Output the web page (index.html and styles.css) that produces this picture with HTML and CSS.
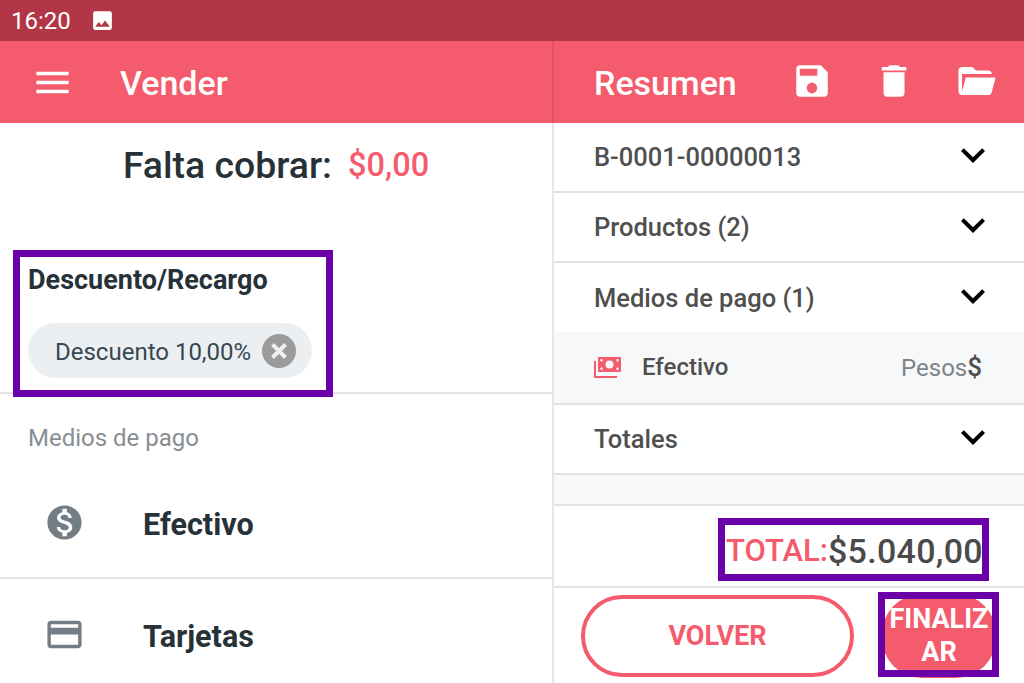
FILE: index.html
```html
<!DOCTYPE html>
<html lang="es">
<head>
    <meta charset="UTF-8">
    <meta name="viewport" content="width=device-width, initial-scale=1.0">
    <title>Vender</title>
    <link rel="stylesheet" href="styles.css">
</head>
<body>
    <div class="status-bar">
        <span class="status-time">16:20</span>
        <svg class="status-icon" viewBox="0 0 24 24"><path d="M21 19V5c0-1.1-.9-2-2-2H5c-1.1 0-2 .9-2 2v14c0 1.1.9 2 2 2h14c1.1 0 2-.9 2-2zM8.5 13.5l2.5 3.01L14.5 12l4.5 6H5l3.5-4.5z"/></svg>
    </div>

    <div class="main">
        <div class="left">
            <header class="app-bar app-bar-left">
                <svg class="bar-icon" viewBox="0 0 24 24"><path d="M3 18h18v-2H3v2zm0-5h18v-2H3v2zm0-7v2h18V6H3z"/></svg>
                <h1>Vender</h1>
            </header>

            <div class="left-body">
                <div class="falta">
                    <span class="falta-label">Falta cobrar:</span>
                    <span class="falta-value">$0,00</span>
                </div>

                <section class="descuento">
                    <h2>Descuento/Recargo</h2>
                    <div class="chip">
                        <span>Descuento 10,00%</span>
                        <svg class="chip-close" viewBox="0 0 34 34">
                            <circle cx="17" cy="17" r="17"/>
                            <path d="M10.5 10.5l13 13M23.5 10.5l-13 13"/>
                        </svg>
                    </div>
                </section>

                <div class="medios-label">Medios de pago</div>

                <div class="medio medio-efectivo">
                    <svg class="medio-icon" viewBox="0 0 24 24"><path d="M12 2C6.48 2 2 6.48 2 12s4.48 10 10 10 10-4.48 10-10S17.52 2 12 2zm1.41 16.09V20h-2.67v-1.93c-1.71-.36-3.16-1.46-3.27-3.4h1.96c.1 1.05.82 1.87 2.65 1.87 1.96 0 2.4-.98 2.4-1.59 0-.83-.44-1.61-2.67-2.14-2.48-.6-4.18-1.62-4.18-3.67 0-1.72 1.39-2.84 3.11-3.21V4h2.67v1.95c1.86.45 2.79 1.86 2.85 3.39H14.3c-.05-1.11-.64-1.87-2.22-1.87-1.5 0-2.4.68-2.4 1.64 0 .84.65 1.39 2.67 1.91s4.18 1.39 4.18 3.91c-.01 1.83-1.38 2.83-3.12 3.16z"/></svg>
                    <span>Efectivo</span>
                </div>
                <div class="medio medio-tarjetas">
                    <svg class="medio-icon" viewBox="0 0 24 24"><path d="M20 4H4c-1.11 0-1.99.89-1.99 2L2 18c0 1.11.89 2 2 2h16c1.11 0 2-.89 2-2V6c0-1.11-.89-2-2-2zm0 14H4v-6h16v6zm0-10H4V6h16v2z"/></svg>
                    <span>Tarjetas</span>
                </div>
            </div>
        </div>

        <div class="right">
            <header class="app-bar app-bar-right">
                <h1>Resumen</h1>
                <div class="bar-actions">
                    <svg class="bar-icon" viewBox="0 0 24 24"><path d="M17 3H5c-1.11 0-2 .9-2 2v14c0 1.1.89 2 2 2h14c1.1 0 2-.9 2-2V7l-4-4zm-5 16c-1.66 0-3-1.34-3-3s1.34-3 3-3 3 1.34 3 3-1.34 3-3 3zm3-10H5V5h10v4z"/></svg>
                    <svg class="bar-icon" viewBox="0 0 24 24"><path d="M6 19c0 1.1.9 2 2 2h8c1.1 0 2-.9 2-2V7H6v12zM19 4h-3.5l-1-1h-5l-1 1H5v2h14V4z"/></svg>
                    <svg class="bar-icon" viewBox="0 0 24 24"><path d="M19 20H4c-1.11 0-2-.9-2-2V6c0-1.11.89-2 2-2h6l2 2h7a2 2 0 0 1 2 2H4v10l2.14-8h17.07l-2.28 8.5c-.23.87-1.01 1.5-1.93 1.5z"/></svg>
                </div>
            </header>

            <div class="row">
                <span>B-0001-00000013</span>
                <svg class="chevron" viewBox="0 0 24 24"><path d="M7.41 8.59L12 13.17l4.59-4.58L18 10l-6 6-6-6 1.41-1.41z"/></svg>
            </div>
            <div class="row">
                <span>Productos (2)</span>
                <svg class="chevron" viewBox="0 0 24 24"><path d="M7.41 8.59L12 13.17l4.59-4.58L18 10l-6 6-6-6 1.41-1.41z"/></svg>
            </div>
            <div class="row row-open">
                <span>Medios de pago (1)</span>
                <svg class="chevron" viewBox="0 0 24 24"><path d="M7.41 8.59L12 13.17l4.59-4.58L18 10l-6 6-6-6 1.41-1.41z"/></svg>
            </div>
            <div class="pago">
                <svg class="pago-icon" viewBox="0 0 28 22"><path fill-rule="evenodd" d="M5 1h21a1 1 0 0 1 1 1v13a1 1 0 0 1-1 1H5a1 1 0 0 1-1-1V2a1 1 0 0 1 1-1zm10.5 3.5a4 4 0 1 0 0 8 4 4 0 1 0 0-8zM7.5 3a1.3 1.3 0 1 0 0 2.6 1.3 1.3 0 1 0 0-2.6zm16 0a1.3 1.3 0 1 0 0 2.6 1.3 1.3 0 1 0 0-2.6zm-16 8.4a1.3 1.3 0 1 0 0 2.6 1.3 1.3 0 1 0 0-2.6zm16 0a1.3 1.3 0 1 0 0 2.6 1.3 1.3 0 1 0 0-2.6zM0 5h2v15h21v2H1a1 1 0 0 1-1-1z"/></svg>
                <span class="pago-name">Efectivo</span>
                <span class="pago-moneda">Pesos<b>$</b></span>
            </div>
            <div class="row">
                <span>Totales</span>
                <svg class="chevron" viewBox="0 0 24 24"><path d="M7.41 8.59L12 13.17l4.59-4.58L18 10l-6 6-6-6 1.41-1.41z"/></svg>
            </div>
            <div class="spacer"></div>

            <div class="total">
                <span class="total-label">TOTAL:</span><span class="total-value">$5.040,00</span>
            </div>

            <div class="actions">
                <button class="btn-volver">VOLVER</button>
                <button class="btn-finalizar">FINALIZAR</button>
            </div>
        </div>
    </div>

    <!-- marcas violetas sobre la captura -->
    <div class="mark mark-descuento"></div>
    <div class="mark mark-total"></div>
    <div class="mark mark-finalizar"></div>
</body>
</html>
```

FILE: styles.css
```css
* {
    box-sizing: border-box;
}

html, body {
    margin: 0;
    padding: 0;
}

body {
    position: relative;
    width: 1024px;
    height: 683px;
    overflow: hidden;
    background: #fff;
    font-family: Roboto, sans-serif;
    color: #263238;
}

h1, h2 {
    margin: 0;
}

.status-bar {
    display: flex;
    align-items: center;
    height: 41px;
    padding-left: 11px;
    background: #b23645;
    color: #fff;
}

.status-time {
    font-size: 24px;
    margin-top: 1px;
    margin-right: 19px;
}

.status-icon {
    width: 25px;
    height: 25px;
    fill: #fff;
}

.main {
    display: flex;
    height: 642px;
}

.left {
    width: 554px;
}

.left-body {
    height: 560px;
    border-right: 2px solid #e6e6e6;
}

.right {
    flex: 1;
    min-width: 0;
}

.app-bar {
    display: flex;
    align-items: center;
    height: 82px;
    background: #f45b6c;
    color: #fff;
}

.app-bar h1 {
    padding-top: 2px;
    font-size: 34px;
    font-weight: 500;
}

.app-bar-left {
    padding-left: 31px;
    border-right: 2px solid #dc5465;
}

.app-bar-left h1 {
    margin-left: 46px;
}

.app-bar-right {
    justify-content: space-between;
    padding: 0 27px 0 40px;
}

.bar-icon {
    width: 43px;
    height: 43px;
    fill: #fff;
}

.bar-actions {
    display: flex;
    gap: 40px;
    margin-top: -3px;
}

.bar-actions .bar-icon {
    width: 42px;
    height: 42px;
}

.falta {
    display: flex;
    justify-content: center;
    align-items: center;
    gap: 16px;
    height: 84px;
}

.falta-label {
    font-size: 37.4px;
    font-weight: 500;
}

.falta-value {
    font-size: 32.5px;
    font-weight: 500;
    color: #f45b6c;
}

.descuento {
    height: 187px;
    padding: 58px 28px 0;
    border-bottom: 2px solid #e4e4e4;
}

.descuento h2 {
    font-size: 27px;
    font-weight: 700;
    line-height: 30px;
}

.chip {
    display: flex;
    align-items: center;
    justify-content: space-between;
    width: 284px;
    height: 55px;
    margin-top: 28px;
    padding: 0 16px 0 27px;
    border-radius: 28px;
    background: #eceff2;
    font-size: 24px;
    color: #37474f;
}

.chip span {
    padding-top: 3px;
}

.chip-close {
    width: 34px;
    height: 34px;
}

.chip-close circle {
    fill: #9b9b9b;
}

.chip-close path {
    fill: none;
    stroke: #eef0f2;
    stroke-width: 4;
}

.medios-label {
    height: 77px;
    padding: 30px 28px 0;
    font-size: 24px;
    line-height: 28px;
    color: #878e94;
}

.medio {
    display: flex;
    align-items: center;
    height: 108px;
    padding-left: 44px;
    font-size: 30.5px;
    font-weight: 700;
}

.medio span {
    margin-top: 1px;
    margin-left: 58px;
}

.medio-efectivo {
    border-bottom: 2px solid #e4e4e4;
}

.medio-tarjetas {
    height: 113px;
}

.medio-icon {
    width: 41px;
    height: 41px;
    margin-top: -3px;
    fill: #737d86;
}

.row {
    display: flex;
    align-items: center;
    justify-content: space-between;
    height: 70px;
    padding: 0 27px 0 40px;
    border-bottom: 2px solid #e2e2e2;
    font-size: 25.5px;
    font-weight: 500;
    color: #4f4f4f;
}

.row-open {
    height: 69px;
    border-bottom: none;
}

.chevron {
    width: 48px;
    height: 48px;
    fill: #000;
    margin-top: -4px;
}

.pago {
    display: flex;
    align-items: center;
    height: 73px;
    padding: 0 42px 0 40px;
    background: #f7f8f9;
    border-bottom: 2px solid #e2e2e2;
    color: #4f4f4f;
    font-size: 24px;
}

.pago-icon {
    width: 28px;
    height: 22px;
    fill: #f45b6c;
    margin-top: -2px;
}

.pago-name {
    margin-left: 20px;
    margin-top: -1px;
    font-weight: 500;
}

.pago-moneda {
    margin-left: auto;
    margin-top: -1px;
    color: #7d8589;
}

.pago-moneda b {
    color: #4f4f4f;
    font-weight: 500;
    font-size: 26px;
}

.spacer {
    height: 31px;
    background: #f7f8f9;
    border-bottom: 2px solid #e2e2e2;
}

.total {
    display: flex;
    justify-content: flex-end;
    align-items: center;
    height: 82px;
    padding: 9px 41px 0 0;
    border-bottom: 2px solid #e2e2e2;
}

.total-label {
    font-size: 31px;
    font-weight: 500;
    color: #f45b6c;
}

.total-value {
    font-size: 34px;
    font-weight: 500;
    letter-spacing: 0.3px;
    color: #4a4a4a;
}

.actions {
    display: flex;
    justify-content: space-between;
    align-items: flex-start;
    padding: 7px 28px 0 27px;
}

.actions button {
    font-family: Roboto, sans-serif;
    font-size: 27px;
    font-weight: 700;
}

.btn-volver {
    width: 273px;
    height: 82px;
    border: 4px solid #f45b6c;
    border-radius: 41px;
    background: #fff;
    color: #f45b6c;
}

.btn-finalizar {
    width: 114px;
    height: 84px;
    margin-top: -1px;
    padding: 0 5px;
    border: none;
    border-radius: 40px;
    background: #f45b6c;
    color: #fff;
    overflow-wrap: anywhere;
    line-height: 33px;
}

.mark {
    position: absolute;
    border: 7px solid #6a00a8;
}

.mark-descuento {
    left: 13px;
    top: 250px;
    width: 320px;
    height: 147px;
}

.mark-total {
    left: 718px;
    top: 518px;
    width: 271px;
    height: 63px;
}

.mark-finalizar {
    left: 878px;
    top: 592px;
    width: 121px;
    height: 85px;
}
```
